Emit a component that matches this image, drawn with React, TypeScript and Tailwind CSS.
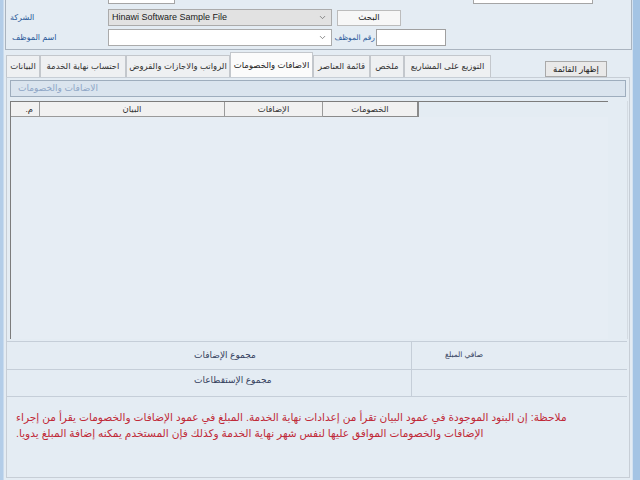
import React from 'react';
import { ChevronDown } from 'lucide-react';

const tabs = [
    { label: 'البيانات', w: 'w-[34px]' },
    { label: 'احتساب نهاية الخدمة', w: 'w-[86px]' },
    { label: 'الرواتب والاجازات والقروض', w: 'w-[104px]' },
    { label: 'الاضافات والخصومات', w: 'w-[83px]', active: true },
    { label: 'قائمة العناصر', w: 'w-[57px]' },
    { label: 'ملخص', w: 'w-[34px]' },
    { label: 'التوزيع على المشاريع', w: 'w-[87px]' },
];

const Select: React.FC<{ value?: string; grey?: boolean }> = ({ value, grey }) => (
    <div className={`w-[224px] h-[17px] border border-[#ababab] flex items-center pl-[3px] pr-[4px] ${grey ? 'bg-[#e2e2e2]' : 'bg-white'}`}>
        <span className="flex-1 text-[9px] text-[#1a1a1a] truncate">{value}</span>
        <ChevronDown className="w-[9px] h-[9px] text-[#6b6b6b]" strokeWidth={2} />
    </div>
);

const App: React.FC = () => {
    return (
        <div className="w-[640px] h-[480px] overflow-hidden flex bg-[#e4ecf3] font-['Liberation_Sans','DejaVu_Sans',sans-serif]">
            {/* window frame left */}
            <div className="w-[4px] h-full bg-[#b3cde8] border-r border-[#c9dbee]" />

            <div className="flex-1 flex flex-col min-w-0">
                {/* top filter panel */}
                <div className="-mt-[17px] h-[67px] ml-[1px] border-l border-b border-r border-[#aab4bf] flex flex-col pt-[4px]">
                    <div className="flex items-center h-[17px]">
                        <div className="w-[102px] pl-[4px] text-[8px] text-[#2a5a9a]"><span dir="rtl">التاريخ</span></div>
                        <div className="w-[67px] h-[17px] bg-white border border-[#a5a5a5] text-[9px] pl-[3px] flex items-center">31/12/2021</div>
                        <div className="w-[240px]" />
                        <div className="w-[58px] text-[8px] text-[#2a5a9a]"><span dir="rtl">حتى تاريخ</span></div>
                        <div className="w-[120px] h-[17px] bg-white border border-[#a5a5a5]" />
                    </div>
                    <div className="flex items-center h-[17px] mt-[5px]">
                        <div className="w-[102px] pl-[4px] text-[8px] text-[#2a5a9a]"><span dir="rtl">الشركة</span></div>
                        <Select value="Hinawi Software Sample File" grey />
                        <button className="ml-[5px] w-[64px] h-[16px] bg-[#f7f7f7] border border-[#bcbcbc] text-[8.5px] text-[#222]">البحث</button>
                    </div>
                    <div className="flex items-center h-[17px] mt-[3px]">
                        <div className="w-[102px] pl-[6px] text-[8px] text-[#2a5a9a]"><span dir="rtl">اسم الموظف</span></div>
                        <Select />
                        <div className="w-[44px] pr-[1px] flex justify-end text-[7.5px] text-[#2a5a9a] whitespace-nowrap"><span dir="rtl">رقم الموظف</span></div>
                        <div className="w-[70px] h-[17px] bg-white border border-[#a0a0a0]" />
                    </div>
                </div>

                {/* tabs row */}
                <div className="flex items-end h-[25px] mt-[2px] ml-[2px] mr-[25px]">
                    {tabs.map((t) => (
                        <div
                            key={t.label}
                            dir="rtl"
                            className={`${t.w} flex items-center justify-center border border-b-0 border-[#c3c7cc] text-[8.5px] whitespace-nowrap ${t.active ? 'h-[25px] bg-[#fbfbfb] text-[#222]' : 'h-[22px] bg-[#eef0f2] text-[#333]'}`}
                        >
                            {t.label}
                        </div>
                    ))}
                    <div className="flex-1" />
                    <button className="w-[62px] h-[16px] bg-[#e9e9e9] border border-[#a9a9a9] text-[8.5px] text-[#222]" dir="rtl">إظهار القائمة</button>
                </div>

                {/* tab page */}
                <div className="flex-1 ml-[2px] mr-[2px] border border-[#c7ced6] flex flex-col min-h-0">
                    <div className="mt-[2px] ml-[3px] w-[616px] h-[17px] bg-[#dae4ee] border border-[#9eadbd] flex items-center pl-[7px] text-[9px] text-[#8ea6c6]">
                        <span dir="rtl">الاضافات والخصومات</span>
                    </div>

                    {/* grid */}
                    <div className="mt-[4px] ml-[3px] w-[618px] h-[238px] flex">
                        <div className="w-[598px] border-t border-l border-[#7c7c7c] flex flex-col">
                            <div className="flex h-[15px] text-[8.5px] text-[#333]">
                                <div className="w-[29px] bg-[#f1f1f1] border-r border-b border-[#9a9a9a] flex items-center justify-end pr-[6px]"><span dir="rtl">م.</span></div>
                                <div className="w-[185px] bg-[#f1f1f1] border-r border-b border-[#9a9a9a] flex items-center justify-center"><span dir="rtl">البيان</span></div>
                                <div className="w-[98px] bg-[#f1f1f1] border-r border-b border-[#9a9a9a] flex items-center justify-center"><span dir="rtl">الإضافات</span></div>
                                <div className="w-[96px] bg-[#f1f1f1] border-r-2 border-b border-[#8a8a8a] flex items-center justify-center"><span dir="rtl">الخصومات</span></div>
                            </div>
                            <div className="flex-1 bg-[#e6edf4]" />
                        </div>
                        <div className="flex-1 border-r border-[#d4dbe2]" />
                    </div>

                    {/* totals */}
                    <div className="mt-[2px] w-[620px] border-t border-[#c5ced8] text-[#34415e]">
                        <div className="flex h-[28px] border-b border-[#c5ced8]">
                            <div className="w-[405px] border-r border-[#c5ced8] flex items-center pl-[187px]">
                                <span dir="rtl" className="text-[9px]">مجموع الإضافات</span>
                            </div>
                            <div className="flex-1 flex items-center pl-[33px] pb-[2px]">
                                <span dir="rtl" className="text-[7.5px]">صافي المبلغ</span>
                            </div>
                        </div>
                        <div className="flex h-[27px] border-b border-[#c5ced8]">
                            <div className="w-[405px] border-r border-[#c5ced8] flex items-center pl-[187px] pb-[5px]">
                                <span dir="rtl" className="text-[9px]">مجموع الإستقطاعات</span>
                            </div>
                            <div className="flex-1" />
                        </div>
                    </div>

                    {/* note */}
                    <div className="flex-1 pt-[12px] pl-[9px] text-[10.6px] leading-[16px] text-[#c02a38]">
                        <div dir="rtl" className="w-[551px] text-left whitespace-nowrap">
                            ملاحظة: إن البنود الموجودة في عمود البيان تقرأ من إعدادات نهاية الخدمة. المبلغ في عمود الإضافات والخصومات يقرأ من إجراء
                        </div>
                        <div dir="rtl" className="w-[551px] text-left whitespace-nowrap">
                            الإضافات والخصومات الموافق عليها لنفس شهر نهاية الخدمة وكذلك فإن المستخدم يمكنه إضافة المبلغ يدويا.
                        </div>
                    </div>
                </div>
                <div className="h-[2px]" />
            </div>

            {/* window frame right */}
            <div className="w-[8px] h-full bg-[#a4c4e4] border-l border-[#d3e2f1]" />
        </div>
    );
};

export default App;
